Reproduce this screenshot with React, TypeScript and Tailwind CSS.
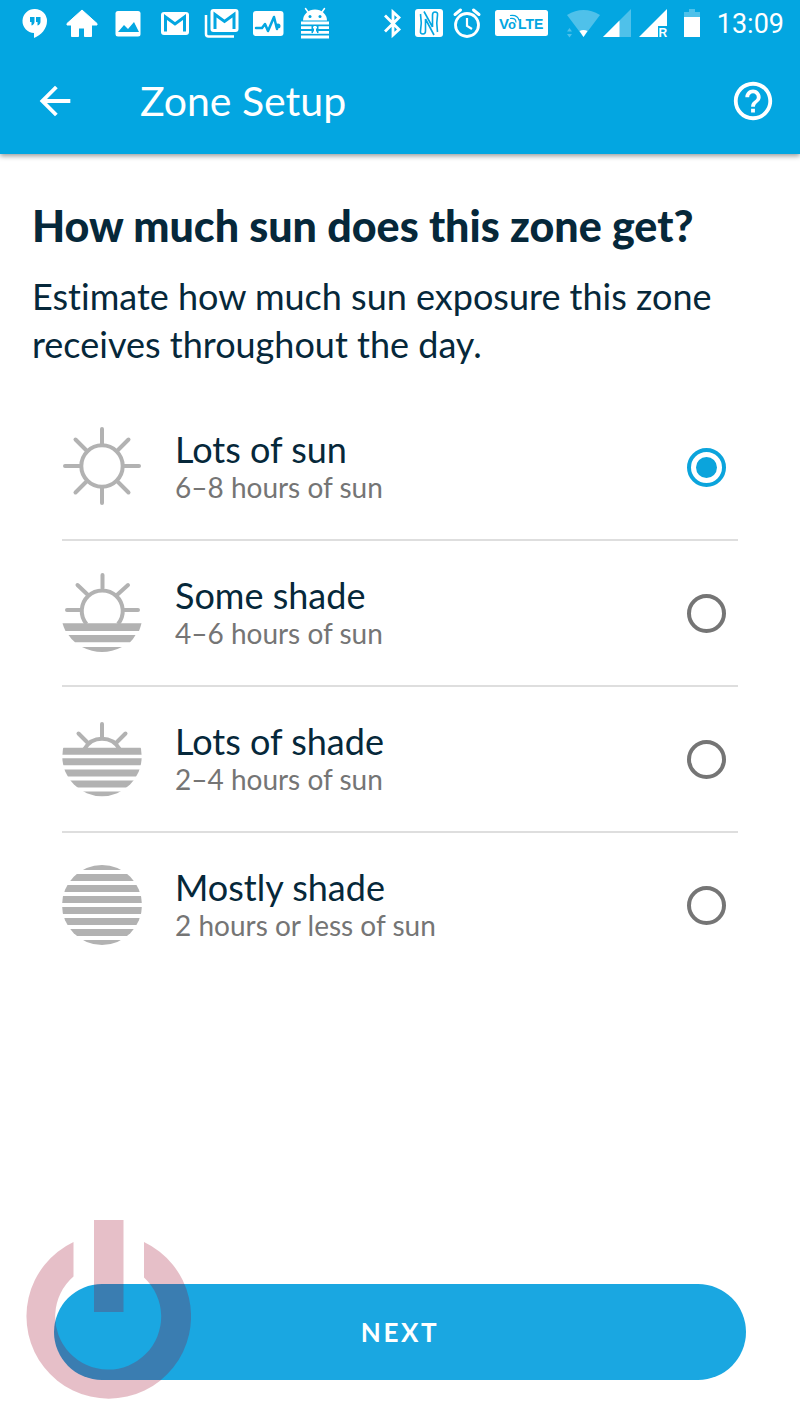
import { useState, type ReactNode } from "react";
import { MdArrowBack, MdHelpOutline } from "react-icons/md";

type SunOption = {
  id: string;
  title: string;
  detail: string;
  icon: ReactNode;
};

const OPTIONS: SunOption[] = [
  { id: "lots-sun", title: "Lots of sun", detail: "6–8 hours of sun", icon: <FullSun /> },
  { id: "some-shade", title: "Some shade", detail: "4–6 hours of sun", icon: <SomeShade /> },
  { id: "lots-shade", title: "Lots of shade", detail: "2–4 hours of sun", icon: <LotsOfShade /> },
  { id: "mostly-shade", title: "Mostly shade", detail: "2 hours or less of sun", icon: <MostlyShade /> },
];

export default function App() {
  const [selected, setSelected] = useState("lots-sun");

  return (
    <div className="flex min-h-screen flex-col bg-white font-['Lato',sans-serif] text-[#06283a] [font-variant-ligatures:none]">
      <header className="bg-[#03a6e1] text-white shadow-[0_2px_5px_rgba(0,0,0,0.4)]">
        <StatusBar />
        <div className="flex h-[106px] items-center pr-6 pl-8">
          <button type="button" aria-label="Back">
            <MdArrowBack className="size-[46px]" />
          </button>
          <div className="ml-[62px] text-[41px] leading-12">Zone Setup</div>
          <button type="button" aria-label="Help" className="ml-auto">
            <MdHelpOutline className="size-[46px]" />
          </button>
        </div>
      </header>

      <main className="px-8 pt-12">
        <h1 id="question" className="text-[43px] leading-12 font-black">
          How much sun does this zone get?
        </h1>
        <p className="mt-[22px] text-[36px] leading-12">
          Estimate how much sun exposure this zone receives throughout the day.
        </p>

        <fieldset aria-labelledby="question" className="mt-[27px] px-[30px]">
          {OPTIONS.map((o) => (
            <label
              key={o.id}
              className="flex h-[146px] items-center border-b-2 border-[#dedede] pr-3 last:border-transparent"
            >
              {o.icon}
              <span className="ml-[33px] flex flex-col">
                <span className="text-[36px] leading-10">{o.title}</span>
                <span className="text-[28px] leading-9 text-[#757575]">{o.detail}</span>
              </span>
              <input
                type="radio"
                name="sun"
                value={o.id}
                checked={selected === o.id}
                onChange={() => setSelected(o.id)}
                className="ml-auto size-[39px] appearance-none rounded-full border-4 border-[#757575] bg-clip-content p-[5px] checked:border-[#0ba4dc] checked:bg-[#0ba4dc]"
              />
            </label>
          ))}
        </fieldset>
      </main>

      <footer className="relative mt-auto px-[54px] pt-12 pb-[42px]">
        <button
          type="button"
          className="h-24 w-full rounded-full bg-[#1aa7e1] text-[26px] font-bold tracking-widest text-white"
        >
          NEXT
        </button>
        <PowerMark />
      </footer>
    </div>
  );
}

function StatusBar() {
  return (
    <div className="flex h-12 items-center justify-between pr-4 pl-3">
      <div className="grid w-[326px] grid-cols-7 justify-items-center">
        <Glyph width={36}>
          <path d="M18 3a12 12 0 1 0-1 24v5c7-3 13-9 13-17A12 12 0 0 0 18 3z" fill="#fff" />
          <path d="M13 11h4.500v4.500q0 3-3 4v-3.500H13zM19 11h4.500v4.500q0 3-3 4v-3.500H19z" fill="#03a6e1" />
        </Glyph>
        <Glyph width={36}>
          <path d="M18 4 3 17.500V19h4.500v11.500h7V22h6v8.500h7V19H33v-1.500z" fill="#fff" stroke="#fff" strokeLinejoin="round" />
        </Glyph>
        <Glyph width={36}>
          <rect x="5.500" y="5" width="25" height="25.500" rx="2.500" fill="#fff" />
          <path d="m8 26 6-7 4 4 6-7 5 10z" fill="#03a6e1" />
        </Glyph>
        <Glyph width={36}>
          <rect x="4" y="6" width="28" height="23" rx="3" fill="#fff" />
          <path d="M8.500 25.500V11L18 18l9.500-7v14.500" fill="none" stroke="#03a6e1" strokeWidth="3" />
        </Glyph>
        <Glyph width={36}>
          <path d="M2 9v19q0 2.500 2.500 2.500H30" fill="none" stroke="#fff" strokeWidth="2.500" />
          <rect x="6.500" y="3" width="28" height="23" rx="3" fill="#fff" />
          <path d="M11 23V8.500l9.500 7L30 8.500V23" fill="none" stroke="#03a6e1" strokeWidth="3" />
        </Glyph>
        <Glyph width={36}>
          <rect x="3" y="5" width="30.500" height="25" rx="3" fill="#fff" />
          <path
            d="M6 22h6l3-4 3 7 6-14 3 12"
            fill="none"
            stroke="#03a6e1"
            strokeWidth="2.500"
            strokeLinecap="round"
            strokeLinejoin="round"
          />
          <circle cx="28" cy="20" r="2.500" fill="#03a6e1" />
        </Glyph>
        <Glyph width={36}>
          <path d="M6 14.500a12 11 0 0 1 24 0z" fill="#fff" />
          <path d="m11 6-2.500-3.500M25 6l2.500-3.500" stroke="#fff" strokeWidth="1.500" strokeLinecap="round" />
          <circle cx="13" cy="10.500" r="1.500" fill="#03a6e1" />
          <circle cx="23" cy="10.500" r="1.500" fill="#03a6e1" />
          <path d="M4 17h28M4 21.700h28M4 26.300h28M4 31h28" stroke="#fff" strokeWidth="2.800" />
          <path d="M14.500 19h7v8h-7z" fill="#03a6e1" />
          <path d="M18 20v7M16 21.500h4M16 26.500h4" stroke="#fff" strokeWidth="2" />
        </Glyph>
      </div>

      <div className="flex items-center">
        <Glyph width={20}>
          <path d="m2 9.500 14 14-6 5.500V6l6 5.500L2 25.500" fill="none" stroke="#fff" strokeWidth="2.800" />
        </Glyph>
        <span className="ml-3">
          <Glyph width={28}>
            <rect y="3" width="28" height="28" rx="3" fill="#fff" />
            <path
              d="M8 28q-3 0-2.500-3Q7 17 5.500 8M10.500 13v12q0 3-2.500 3M10.500 13l8.500 16M9 5.500l8.500 15.500M20 6q3 0 2.500 3-1.500 8 0 17M17.500 21V9q0-3 2.500-3"
              fill="none"
              stroke="#03a6e1"
              strokeWidth="1.600"
            />
          </Glyph>
        </span>
        <span className="ml-2">
          <Glyph width={32}>
            <circle cx="16" cy="19" r="11.500" fill="none" stroke="#fff" strokeWidth="2.800" />
            <path d="M16 12v8l5 3" fill="none" stroke="#fff" strokeWidth="2.200" />
            <path d="m4 8.500 5.500-4.500M28 8.500 22.500 4" stroke="#fff" strokeWidth="3" strokeLinecap="round" />
          </Glyph>
        </span>
        <span className="ml-3">
          <Glyph width={54}>
            <rect y="4" width="53" height="26" rx="2.500" fill="#fff" />
            <g fill="#03a6e1" className="font-['Liberation_Sans',sans-serif] font-bold">
              <text x="4" y="23" fontSize="15">V</text>
              <text x="13" y="23" fontSize="13">o</text>
              <text x="23" y="23" fontSize="14">LTE</text>
            </g>
            <path d="M15 12.500q6-1 6 4M15 9.500q8-1 9 5" fill="none" stroke="#03a6e1" strokeWidth="1.200" />
          </Glyph>
        </span>
        <span className="ml-4">
          <Glyph width={36}>
            <path d="M2 9q16.500-10 33 0L18.500 31z" fill="#4fc1ea" />
            <path d="M14.500 25q4-2 8 0l-4 6z" fill="#fff" />
            <path d="m2 25.500 2.500-3.500L7 25.500zM2 28l2.500 3.500L7 28z" fill="#4fc1ea" />
          </Glyph>
        </span>
        <Glyph width={32}>
          <path d="M30 3v28H2z" fill="#4fc1ea" />
          <path d="M18.500 14.500V31H2z" fill="#fff" />
        </Glyph>
        <span className="ml-1">
          <Glyph width={32}>
            <path d="M30 3v17h-9v11H2z" fill="#fff" />
            <text
              x="21.500"
              y="31"
              fontSize="12"
              fill="#fff"
              className="font-['Liberation_Sans',sans-serif] font-bold"
            >
              R
            </text>
          </Glyph>
        </span>
        <span className="ml-3">
          <Glyph width={20}>
            <path d="M3 11V6h5V3h6v3h5v5z" fill="#4fc1ea" />
            <path d="M3 11h16v20H3z" fill="#fff" />
          </Glyph>
        </span>
        <span className="ml-4 font-['Roboto',sans-serif] text-[27px] leading-12">13:09</span>
      </div>
    </div>
  );
}

function Glyph({ width, children }: { width: number; children: ReactNode }) {
  return (
    <svg width={width} height="36" viewBox={`0 0 ${width} 36`} className="shrink-0" aria-hidden="true">
      {children}
    </svg>
  );
}

function FullSun() {
  return (
    <svg viewBox="0 0 80 80" className="size-20 shrink-0" fill="none" stroke="#b2b2b2" strokeWidth="4">
      <circle cx="40" cy="39" r="20.700" />
      <path
        d="M40 17V2M40 61v15M18 39H3M62 39h15M25 24 13.500 12.500M55 24l11.500-11.500M25 54 13.500 65.500M55 54l11.500 11.500"
        strokeLinecap="round"
      />
    </svg>
  );
}

function SomeShade() {
  return (
    <svg viewBox="0 0 80 80" className="size-20 shrink-0" fill="none" stroke="#b2b2b2" strokeWidth="4">
      <path d="M24.500 51a20.500 20.500 0 1 1 31.500 0" />
      <path d="M40.500 15V2M19 37H5M62 37h14M26 22 15.500 12M55 22l11-10" strokeLinecap="round" />
      <path
        d="M.5 50.300h79q-1 4-2.500 7.700H3.500Q1.500 54 .5 50.300zM6.500 62h67q-2 4-5.500 7.200H13Q9 66 6.500 62zM20 74h40q-20 10-40 0z"
        fill="#b2b2b2"
        stroke="none"
      />
    </svg>
  );
}

function LotsOfShade() {
  return (
    <svg viewBox="0 0 80 80" className="size-20 shrink-0" fill="none" stroke="#b2b2b2" strokeWidth="4">
      <clipPath id="lots-of-shade">
        <circle cx="40" cy="37.500" r="39.700" />
      </clipPath>
      <path d="M22.500 30a20 20 0 0 1 35 0" />
      <path d="M40 19V5M26 24l-9.500-9.500M54 24l9.500-9.500" strokeLinecap="round" />
      <path
        d="M0 32.300h80M0 42.800h80M0 54h80M0 65h80M0 76h80"
        strokeWidth="7"
        clipPath="url(#lots-of-shade)"
      />
    </svg>
  );
}

function MostlyShade() {
  return (
    <svg viewBox="0 0 80 80" className="size-20 shrink-0" fill="none" stroke="#b2b2b2" strokeWidth="7">
      <clipPath id="mostly-shade">
        <circle cx="40" cy="40" r="40" />
      </clipPath>
      <path
        d="M0 1.500h80M0 12.500h80M0 23.500h80M0 34.500h80M0 45.500h80M0 56.500h80M0 67.500h80M0 78.500h80"
        clipPath="url(#mostly-shade)"
      />
    </svg>
  );
}

/* Translucent power symbol laid over the corner of the footer */
function PowerMark() {
  return (
    <svg
      viewBox="0 0 166 180"
      className="pointer-events-none absolute bottom-[23px] left-[25px] h-[180px] w-[166px]"
      fill="#9b0023"
      fillOpacity="0.25"
      aria-hidden="true"
    >
      <path d="M69 1h29.500v92H69z" />
      <path d="M48.500 23A82.300 82.300 0 1 0 119 23V58.500A53 53 0 1 1 48.500 57.500z" />
    </svg>
  );
}
